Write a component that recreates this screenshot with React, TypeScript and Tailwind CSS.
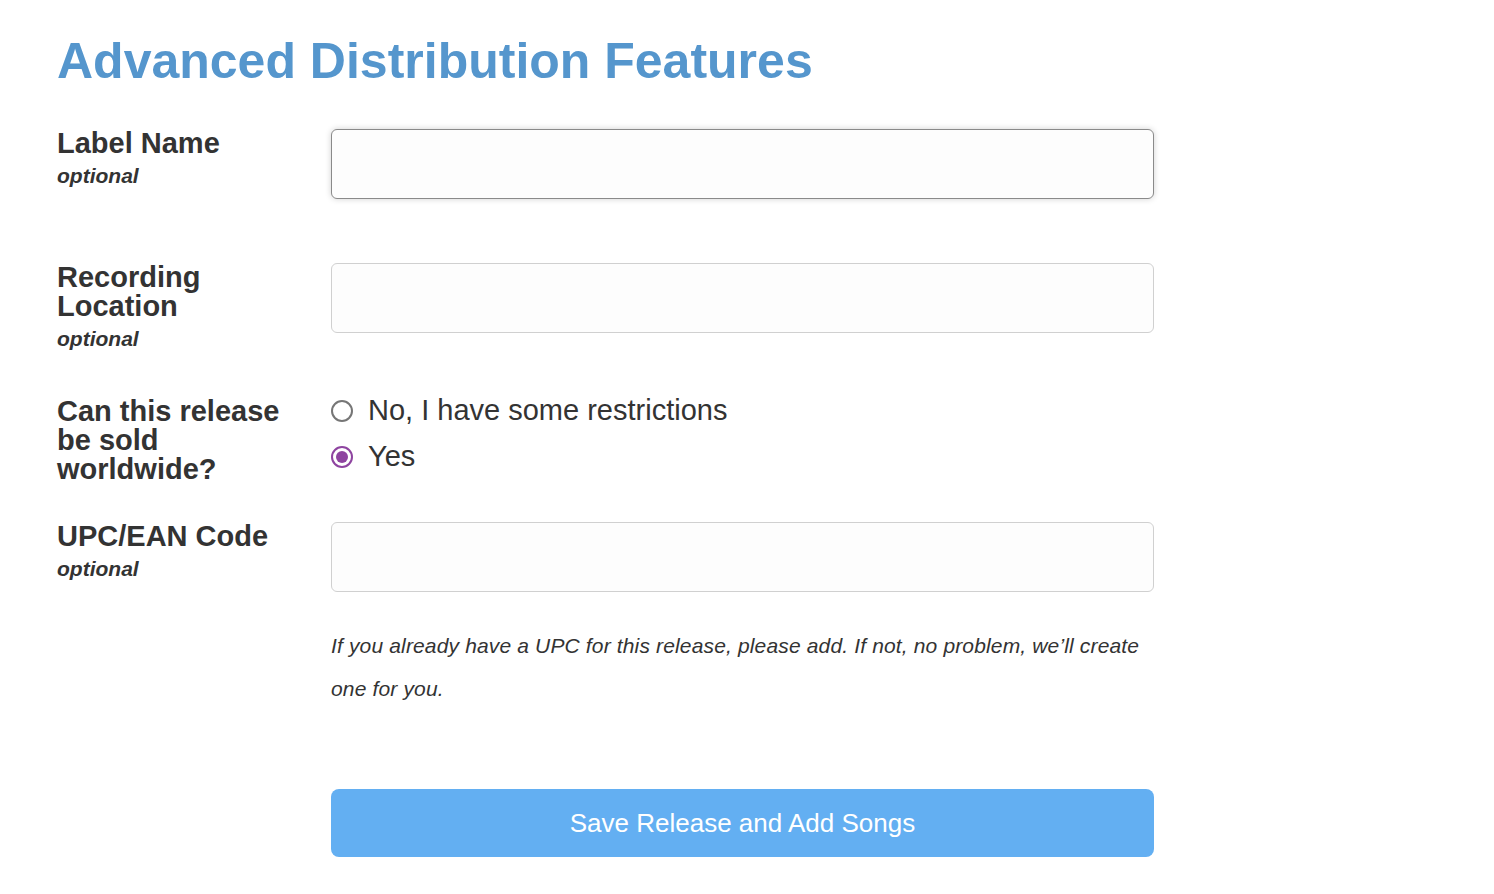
const font = { fontFamily: '"Liberation Sans", Arial, Helvetica, sans-serif' };

const FieldLabel = ({ lines, optional }: { lines: string[]; optional?: boolean }) => (
  <div className="w-[274px] shrink-0 pr-4">
    {lines.map((l) => (
      <div key={l} className="text-[29px] leading-[29px] font-bold text-[#333]">
        {l}
      </div>
    ))}
    {optional && (
      <div className="mt-[5px] text-[21px] leading-[26px] font-bold italic text-[#333]">
        optional
      </div>
    )}
  </div>
);

const TextInput = ({ focused }: { focused?: boolean }) => (
  <input
    type="text"
    className={`w-[823px] h-[70px] rounded-[6px] bg-[#fdfdfd] px-4 text-[24px] outline-none ${
      focused
        ? "border border-[#8a8a8a] shadow-[0_0_6px_rgba(0,0,0,0.18)]"
        : "border border-[#d0d0d0]"
    }`}
  />
);

const Radio = ({ checked, label }: { checked?: boolean; label: string }) => (
  <label className="flex items-center h-[46px] cursor-pointer">
    <span
      className={`flex items-center justify-center w-[22px] h-[22px] rounded-full bg-white mr-[15px] ${
        checked ? "border-2 border-[#8e44a0]" : "border-2 border-[#767676]"
      }`}
    >
      {checked && <span className="w-[12px] h-[12px] rounded-full bg-[#8e44a0]" />}
    </span>
    <span className="text-[29px] text-[#333]">{label}</span>
  </label>
);

export default function App() {
  return (
    <div className="min-h-screen bg-white" style={font}>
      <div className="pl-[57px] pt-[31px]">
        <h1 className="text-[50px] leading-[60px] font-bold text-[#5596cd]">
          Advanced Distribution Features
        </h1>

        <div className="flex mt-[38px]">
          <FieldLabel lines={["Label Name"]} optional />
          <TextInput focused />
        </div>

        <div className="flex mt-[64px]">
          <FieldLabel lines={["Recording", "Location"]} optional />
          <TextInput />
        </div>

        <div className="flex mt-[45px]">
          <FieldLabel lines={["Can this release", "be sold", "worldwide?"]} />
          <div className="flex flex-col -mt-[9px]">
            <Radio label="No, I have some restrictions" />
            <Radio label="Yes" checked />
          </div>
        </div>

        <div className="flex mt-[38px]">
          <FieldLabel lines={["UPC/EAN Code"]} optional />
          <TextInput />
        </div>

        <div className="flex mt-[32px]">
          <div className="w-[274px] shrink-0" />
          <p className="w-[823px] text-[21px] leading-[43px] tracking-[0.15px] italic text-[#333]">
            If you already have a UPC for this release, please add. If not, no problem, we’ll
            create one for you.
          </p>
        </div>

        <div className="flex mt-[79px] pb-[37px]">
          <div className="w-[274px] shrink-0" />
          <button className="w-[823px] h-[68px] rounded-[8px] bg-[#63aff2] text-white text-[26px]">
            Save Release and Add Songs
          </button>
        </div>
      </div>
    </div>
  );
}
